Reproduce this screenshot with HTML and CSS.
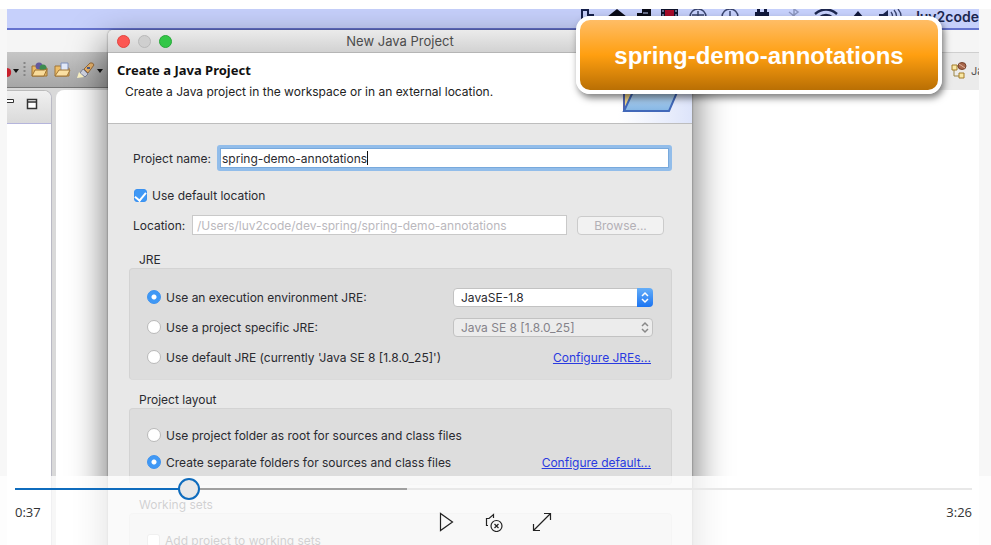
FILE: index.html
```html
<!DOCTYPE html>
<html lang="en">
<head>
<meta charset="utf-8">
<title>New Java Project</title>
<link rel="stylesheet" href="styles.css">
</head>
<body>
<main class="player">
  <div class="video">
    <div class="menubar">
      <svg class="cell narrow" viewBox="0 0 26 20"><path d="M4 12V1h6v5h5v7" fill="none" stroke="#15204c" stroke-width="2"/></svg>
      <svg class="cell narrow" viewBox="0 0 26 20"><path d="M13 0 3 8h4v6h12V8h4z" fill="#0a0c18"/></svg>
      <svg class="cell narrow" viewBox="0 0 26 20"><path d="M7 4h5V0h9v14H7z" fill="#0a0c18"/><path d="M13 4h5" stroke="#c5d0fa"/></svg>
      <svg class="cell narrow" viewBox="0 0 26 20"><path d="M5 0h17v14H5z" fill="#10142c"/><path d="M9 1h9v12H9z" fill="#a80d2c"/><path d="M7 1v12M20 1v12" stroke="#c5d0fa" stroke-dasharray="2 2"/></svg>
      <svg class="cell" viewBox="0 0 32 20"><circle cx="16" cy="8" r="8" fill="none" stroke="#39446f" stroke-width="1.5"/><path d="M16 2v12M10 6h12" stroke="#39446f" stroke-width="1.5"/></svg>
      <svg class="cell" viewBox="0 0 32 20"><circle cx="16" cy="8" r="8" fill="none" stroke="#39446f" stroke-width="1.5"/><path d="M16 2v6h5" fill="none" stroke="#39446f" stroke-width="1.5"/></svg>
      <svg class="cell" viewBox="0 0 32 20"><path d="M11 0h3v3h4V0h3v3h2v9H9V3h2z" fill="#10183c"/></svg>
      <svg class="cell" viewBox="0 0 32 20"><path d="m11 3 9 7-4 4V0l4 3-9 7" fill="none" stroke="#8b95bf" stroke-width="1.5"/></svg>
      <svg class="cell" viewBox="0 0 32 20"><path d="M5 5q11-9 22 0M9 9q7-6 14 0" fill="none" stroke="#1c264f" stroke-width="2.5"/></svg>
      <svg class="cell" viewBox="0 0 32 20"><path d="m16 2 6 7H10z" fill="#10183c"/></svg>
      <svg class="cell" viewBox="0 0 32 20"><path d="M5 5h4l5-4v13l-5-4H5z" fill="#1c264f"/><path d="M17 3q3 4 0 8M20 1q5 6 0 12M24 0q6 7 0 14" fill="none" stroke="#39446f" stroke-width="1.3"/></svg>
      <span class="user">luv2code</span>
    </div>
    <div class="ide-title"></div>
    <div class="toolbars">
      <div class="toolbar">
        <svg width="100" height="34" viewBox="0 0 100 34">
          <path d="M0 16q5 0 4 6-1 3-4 3z" fill="#c8202c"/>
          <path d="M6 17h6l-3 4zM90 17h6l-3 4z" fill="#151515"/>
          <path d="M17.500 10v16" stroke="#858585" stroke-width="2" stroke-dasharray="2 2"/>
          <path d="M25 14h5l2 2h8v8H25z" fill="#e8b965" stroke="#9d7233"/>
          <circle cx="32" cy="14" r="3.500" fill="#63599d"/><circle cx="36" cy="16" r="3.500" fill="#3c8b51"/>
          <path d="m25 24 3-6h9l3-1-3 7z" fill="#f9dc9b" stroke="#9d7233"/>
          <path d="M48 14h6l1 2h7v8H48z" fill="#edbd68" stroke="#a27736"/>
          <path d="M54 11h7v9h-7z" fill="#e1e9f9" stroke="#7f90bb"/><path d="m48 24 4-6h11l-3 6z" fill="#fbe0a3" stroke="#a27736"/>
          <path d="m77 17 6-6q3-1 4 2l-6 8z" fill="#edb86f" stroke="#9b6e3e"/><path d="m76 17 5 5-3 3-5-4z" fill="#d5d9e7" stroke="#81869a"/><path d="m72 20-2 6 7-1z" fill="#fff7c7"/><path d="M80 16h3" stroke="#51618e" stroke-width="2"/>
        </svg>
      </div>
      <div class="perspectives">
        <svg width="16" height="20" viewBox="0 0 16 20"><path d="M3 7v8h7M4 5h5" fill="none" stroke="#9b8545"/><path d="M1 4h5v5H1zM8 12h5v5H8z" fill="#f9e8a5" stroke="#a47d29"/><ellipse cx="11" cy="5" rx="4" ry="3.500" fill="#a9674b" stroke="#75412c"/><path d="m8 3 6 4" stroke="#dfb29c"/></svg>
        <span class="perspective-name">Java</span>
      </div>
    </div>
    <div class="workbench">
      <div class="view">
        <div class="view-tab">
          <svg width="44" height="30" viewBox="0 0 44 30"><path d="M0 8.500h6.500v3H0" fill="#fff" stroke="#333"/><path d="M20.500 8.500h9v9h-9zM20 11h10" fill="#fff" stroke="#333" stroke-width="1.500"/></svg>
        </div>
      </div>
      <div class="editor"></div>
    </div>

    <form class="dialog">
      <div class="titlebar">
        <span class="light close"></span><span class="light minimise"></span><span class="light maximise"></span>
        <span class="window-title">New Java Project</span>
      </div>
      <header class="banner">
        <div>
          <h1>Create a Java Project</h1>
          <p>Create a Java project in the workspace or in an external location.</p>
        </div>
        <svg class="folder" width="74" height="70" viewBox="0 0 74 70">
          <defs>
            <linearGradient id="glow"><stop offset="0" stop-color="#fff"/><stop offset="1" stop-color="#dde4fa"/></linearGradient>
            <linearGradient id="cover" x2="0" y2="1"><stop offset="0" stop-color="#d5e8f8"/><stop offset="1" stop-color="#85b6e4"/></linearGradient>
          </defs>
          <path d="M0 0h74v70H0z" fill="url(#glow)"/>
          <path d="M6 58V24h40v10" fill="#f5d98b" stroke="#5164ad" stroke-width="2"/>
          <path d="m6 58 13-28h44L51 58z" fill="url(#cover)" stroke="#4168b9" stroke-width="2"/>
        </svg>
      </header>
      <div class="form">
        <div class="row name-row">
          <label for="name">Project name:</label>
          <div class="name-box"><input id="name" type="text" value="spring-demo-annotations"><span class="caret"></span></div>
        </div>
        <label class="row default-row"><input type="checkbox" checked>Use default location</label>
        <div class="row location-row">
          <label for="location">Location:</label>
          <input id="location" type="text" value="/Users/luv2code/dev-spring/spring-demo-annotations" disabled>
          <button type="button" disabled>Browse...</button>
        </div>

        <h2>JRE</h2>
        <section class="group jre">
          <div class="row">
            <label class="choice"><input type="radio" name="jre" checked>Use an execution environment JRE:</label>
            <div class="picker">
              <select aria-label="Execution environment"><option>JavaSE-1.8</option></select>
              <svg class="stepper" viewBox="0 0 16 19"><path d="m5 8 3-3 3 3M5 11l3 3 3-3" fill="none" stroke="#fff" stroke-width="1.500"/></svg>
            </div>
          </div>
          <div class="row">
            <label class="choice"><input type="radio" name="jre">Use a project specific JRE:</label>
            <div class="picker off">
              <select aria-label="Project JRE" disabled><option>Java SE 8 [1.8.0_25]</option></select>
              <svg class="stepper" viewBox="0 0 16 19"><path d="m5 8 3-3 3 3M5 11l3 3 3-3" fill="none" stroke="#888" stroke-width="1.500"/></svg>
            </div>
          </div>
          <div class="row">
            <label class="choice"><input type="radio" name="jre">Use default JRE (currently 'Java SE 8 [1.8.0_25]')</label>
            <a href="#jres">Configure JREs...</a>
          </div>
        </section>

        <h2>Project layout</h2>
        <section class="group layout">
          <div class="row"><label class="choice"><input type="radio" name="layout">Use project folder as root for sources and class files</label></div>
          <div class="row">
            <label class="choice"><input type="radio" name="layout" checked>Create separate folders for sources and class files</label>
            <a href="#layout">Configure default...</a>
          </div>
        </section>

        <h2>Working sets</h2>
        <section class="group sets">
          <div class="row"><label class="choice"><input type="checkbox">Add project to working sets</label></div>
        </section>
      </div>
    </form>

    <div class="callout">spring-demo-annotations</div>
  </div>

  <div class="controls">
    <input class="seek" type="range" min="0" max="206" value="36" aria-label="Seek">
    <div class="control-row">
      <span>0:37</span>
      <div class="buttons">
        <button type="button" aria-label="Play"><svg width="20" height="20" viewBox="0 0 20 20"><path d="M4.500 1.500v17l12-8.500z"/></svg></button>
        <button type="button" aria-label="Unmute"><svg width="20" height="20" viewBox="0 0 20 20"><path d="M4 13.500H2.500v-7H5l4.500-4V6"/><circle cx="12.500" cy="14" r="5.500"/><path d="m10.500 12 4 4m0-4-4 4"/></svg></button>
        <button type="button" aria-label="Full screen"><svg width="20" height="20" viewBox="0 0 20 20"><path d="m1.500 18.500 17-17M12 1.500h6.500V8M1.500 12v6.500H8"/></svg></button>
      </div>
      <span class="total">3:26</span>
    </div>
  </div>
</main>
</body>
</html>
```
FILE: styles.css
```css
* { box-sizing: border-box; }

body {
  margin: 0;
  background: #f7f7f7;
  font-family: Inter, "Liberation Sans", sans-serif;
  font-size: 12px;
  color: #2a2a30;
}

h1, h2, p { margin: 0; }
input, select, button { font: inherit; color: inherit; margin: 0; }

.player {
  position: relative;
  height: 100vh;
  border-top: 9px solid #fff;
  padding: 0 12px 0 7px;
  overflow: hidden;
}

.video {
  position: relative;
  height: 100%;
  display: flex;
  flex-direction: column;
  background: #fff;
  overflow: hidden;
}

.menubar {
  display: flex;
  justify-content: flex-end;
  flex: none;
  height: 21px;
  background: #c6d0fb;
  border-bottom: 2px solid #6573ce;
  overflow: hidden;
}
.cell { width: 32px; height: 20px; flex: none; }
.cell.narrow { width: 26px; }
.user {
  margin-left: 10px;
  font-size: 14px;
  line-height: 16px;
  font-weight: 600;
  color: #1c264f;
}

.ide-title { flex: none; height: 22px; background: #f5f5f5; }

.toolbars { display: flex; flex: none; height: 36px; }
.toolbar {
  flex: 1;
  background: linear-gradient(#c6c6c6, #a6a6a6);
  border-bottom: 1px solid #777;
}
.perspectives {
  display: flex;
  align-items: center;
  gap: 4px;
  width: 288px;
  padding-left: 260px;
  overflow: hidden;
  background: #ebebeb;
  border-top: 1px solid #cfcfcf;
}
.perspectives svg { flex: none; }
.perspective-name { color: #555; font-size: 11px; }

.workbench {
  display: flex;
  flex: 1;
  gap: 4px;
  padding-top: 2px;
  background: linear-gradient(90deg, #d9d9d9 20%, #ebebeb 60%);
}
.view {
  width: 45px;
  background: #fff;
  border-right: 1px solid #b9b9c4;
  border-top: 1px solid #bbb;
  border-top-right-radius: 8px;
  overflow: hidden;
}
.view-tab {
  height: 33px;
  background: linear-gradient(#f0f0f0, #dadada);
  border-bottom: 1px solid #b5b5dc;
}
.editor { flex: 1; background: #fff; border-top-left-radius: 8px; }

.dialog {
  position: absolute;
  left: 101px;
  top: 21px;
  width: 584px;
  background: #e8e8e8;
  border-radius: 5px 5px 0 0;
  box-shadow: 0 16px 34px 4px rgba(0, 0, 0, .5), 0 0 2px rgba(0, 0, 0, .5);
}
.titlebar {
  display: flex;
  align-items: center;
  gap: 8px;
  height: 23px;
  padding-left: 9px;
  background: linear-gradient(#ebebeb, #d2d2d2);
  border-bottom: 1px solid #b5b5b5;
  border-radius: 5px 5px 0 0;
}
.light { width: 13px; height: 13px; border-radius: 50%; }
.close { background: #fc5753; border: 1px solid #e2443f; }
.minimise { background: #cfcfcf; border: 1px solid #b9b9b9; }
.maximise { background: #33c748; border: 1px solid #27a839; }
.window-title {
  flex: 1;
  padding-right: 72px;
  text-align: center;
  font-size: 13px;
  color: #4c4c4c;
}

.banner {
  display: flex;
  justify-content: space-between;
  height: 71px;
  padding-left: 9px;
  background: #fff;
  border-bottom: 1px solid #bdbdbd;
}
.banner h1 {
  padding-top: 8px;
  font-family: "Noto Sans", sans-serif;
  font-size: 13px;
  line-height: 18px;
  color: #111;
}
.banner p { padding: 5px 0 0 8px; line-height: 16px; color: #222; }

.form { padding: 19px 20px 0 21px; }
.row { display: flex; align-items: center; height: 20px; }
.form input[type="text"] {
  border: 1px solid #c9c9c9;
  background: #fff;
  padding: 0 4px;
  min-width: 0;
  height: 20px;
  outline: 0;
}
.form input[type="text"]:disabled { color: #bab8bd; }

.name-row { height: 30px; padding-left: 4px; }
.name-row label { width: 84px; }
.name-box {
  display: flex;
  flex: 1;
  align-items: center;
  height: 26px;
  padding: 0 2px;
  background: #fff;
  border: 3px solid #92bdea;
  border-radius: 3px;
  box-shadow: inset 0 0 0 1px #78a9dc;
}
.form .name-box input { border: 0; padding: 0; height: 16px; field-sizing: content; }
.caret { width: 1px; height: 14px; background: #111; }

.default-row { margin-top: 12px; padding-left: 5px; gap: 5px; }

.location-row { margin-top: 10px; padding: 0 8px 0 4px; }
.location-row label { width: 59px; }
.location-row input { flex: 1; }
.location-row button {
  width: 87px;
  height: 19px;
  margin-left: 10px;
  padding: 0;
  background: #f2f2f2;
  border: 1px solid #cbcbcb;
  border-radius: 4px;
  color: #b3b0b6;
}

input[type="radio"], input[type="checkbox"] {
  appearance: none;
  flex: none;
  width: 14px;
  height: 14px;
  background: #fff;
  border: 1px solid #b9b9b9;
}
input[type="radio"] { border-radius: 50%; }
input[type="checkbox"] { width: 13px; height: 13px; border-radius: 3px; }
input[type="radio"]:checked {
  border-color: #3a91f0;
  background: radial-gradient(circle, #fff 2px, #3f98f5 3px);
}
input[type="checkbox"]:checked {
  display: flex;
  justify-content: center;
  border-color: #3a91f0;
  background: #3f98f5;
}
input[type="checkbox"]:checked::after {
  content: "";
  width: 5px;
  height: 9px;
  border: solid #fff;
  border-width: 0 2px 2px 0;
  transform: rotate(40deg);
}

h2 {
  margin-top: 12px;
  padding-left: 10px;
  font-size: 12px;
  line-height: 16px;
  font-weight: 400;
}
.location-row + h2 { margin-top: 17px; }
.group {
  display: flex;
  flex-direction: column;
  padding: 16px 18px 12px 17px;
  background: #dddddd;
  border: 1px solid #d3d3d3;
  border-bottom-color: #dadada;
  border-radius: 4px;
}
.jre { gap: 10px; padding-top: 18px; }
.layout { gap: 7px; }
.group .row { justify-content: space-between; }
.choice { display: flex; align-items: center; gap: 5px; }
a { color: #2a3ae0; padding-right: 2px; }

.picker { display: grid; width: 200px; height: 19px; }
.picker select, .stepper { grid-area: 1 / 1; }
.picker select {
  appearance: none;
  padding: 0 7px;
  background: #fff;
  border: 1px solid #c2c2c2;
  border-radius: 4px;
}
.stepper {
  justify-self: end;
  width: 16px;
  height: 19px;
  background: linear-gradient(#65aef8, #1b74f2);
  border-radius: 0 4px 4px 0;
  pointer-events: none;
}
.picker.off select { background: #ececec; color: #85838a; opacity: 1; }
.off .stepper { background: none; }

.callout {
  position: absolute;
  left: 569px;
  top: 7px;
  width: 366px;
  padding: 20px 0 18px;
  border: 4px solid #fff;
  border-radius: 14px;
  background: linear-gradient(#ffbd66, #ff9f10 50%, #b96f04);
  box-shadow: 2px 4px 7px rgba(0, 0, 0, .5);
  color: #fff;
  font: bold 24px/32px "Liberation Sans", sans-serif;
  text-align: center;
}

.controls {
  position: absolute;
  inset: auto 0 0 0;
  height: 69px;
  padding: 2px 19px 0 15px;
  background: rgba(255, 255, 255, .78);
}
.seek {
  appearance: none;
  display: block;
  width: 100%;
  height: 22px;
  background: linear-gradient(90deg, #0f6cbd 18%, #a0a0a0 18% 41%, #e8e8e8 41%) center / 100% 2px no-repeat;
}
.seek::-webkit-slider-thumb {
  appearance: none;
  width: 22px;
  height: 22px;
  border: 2px solid #0f6cbd;
  border-radius: 50%;
  background: #e8e8e8;
}
.control-row {
  display: grid;
  grid-template-columns: 1fr auto 1fr;
  font: 13px/24px "Open Sans", sans-serif;
  color: #333;
}
.total { text-align: right; }
.buttons { display: flex; padding-top: 10px; }
.buttons button {
  display: grid;
  place-items: center;
  width: 48px;
  height: 24px;
  padding: 0;
  border: 0;
  background: none;
}
.buttons svg { fill: none; stroke: #222; stroke-width: 1.2; }
```
